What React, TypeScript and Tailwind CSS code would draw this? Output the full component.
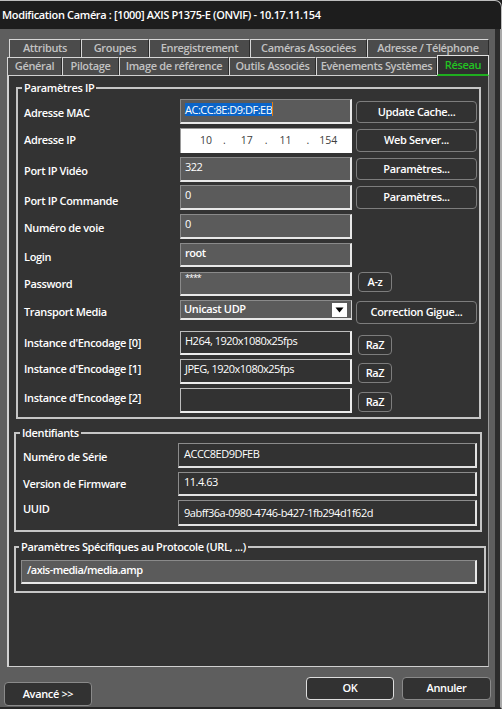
import React from "react";

const inputGray =
  "bg-[#5b5b5b] border-t border-l border-[#8a8a8a] border-b-2 border-r-2 border-b-[#e8e8e8] border-r-[#e8e8e8]";
const inputDark =
  "bg-[#323232] border-t border-l border-[#bdbdbd] border-b-2 border-r-2 border-b-[#ececec] border-r-[#ececec]";
const inputDarkId =
  "bg-[#323232] border-t border-l border-[#8c8c8c] border-b-2 border-r-2 border-b-[#e2e2e2] border-r-[#e2e2e2]";
const btn =
  "bg-[#323232] border border-[#7d7d7d] rounded-[4px] text-white font-semibold flex items-center justify-center";

function Tab({ w, label }: { w: string; label: string }) {
  return (
    <div
      className={`${w} h-full flex items-center justify-center bg-[#4b4b4b] text-[#c2c2c2] border-t border-l border-r border-[#d6d6d6] border-r-[#2c2c2c]`}
    >
      {label}
    </div>
  );
}

function Legend({ children, ml }: { children: React.ReactNode; ml: string }) {
  return (
    <legend className={`${ml} px-[2px] text-white font-semibold leading-[14px]`}>
      {children}
    </legend>
  );
}

function Val({ children, cls = "" }: { children?: React.ReactNode; cls?: string }) {
  return (
    <div className={`pl-[4px] pt-[2px] leading-[14px] text-white font-medium tracking-[-0.5px] ${cls}`}>
      {children}
    </div>
  );
}

function RaZ({ label = "RaZ" }: { label?: string }) {
  return <div className={`${btn} self-start mt-[4px] ml-[6px] w-[34px] h-[20px]`}>{label}</div>;
}

export default function App() {
  return (
    <div className="w-[502px] h-[709px] bg-[#1d1d1d] flex flex-col overflow-hidden font-['Open_Sans','Noto_Sans',sans-serif] text-[11px] tracking-[-0.35px]">
      {/* Title bar */}
      <div className="h-[29px] shrink-0 flex items-center pl-[2px] text-white font-semibold tracking-[-0.35px] border-r border-t border-[#bdbdbd] rounded-tr-[7px]">
        Modification Caméra : [1000] AXIS P1375-E (ONVIF) - 10.17.11.154
      </div>

      {/* Body */}
      <div className="flex-1 bg-[#5e5e5e] flex flex-col border-r-2 border-[#a9a9a9] shadow-[inset_-5px_0_0_#2c2c2c] border-b-2 border-b-[#262626]">
        {/* Tab row 1 */}
        <div className="mt-[10px] ml-[9px] flex h-[18px] font-semibold">
          <Tab w="w-[72px]" label="Attributs" />
          <Tab w="w-[68px]" label="Groupes" />
          <Tab w="w-[101px]" label="Enregistrement" />
          <Tab w="w-[117px]" label="Caméras Associées" />
          <Tab w="w-[122px]" label="Adresse / Téléphone" />
        </div>
        {/* Tab row 2 */}
        <div className="ml-[7px] flex items-end h-[18px] font-semibold relative z-10">
          <Tab w="w-[55px]" label="Général" />
          <Tab w="w-[57px]" label="Pilotage" />
          <Tab w="w-[110px]" label="Image de référence" />
          <Tab w="w-[87px]" label="Outils Associés" />
          <Tab w="w-[121px]" label="Evènements Systèmes" />
          <div className="w-[52px] h-[21px] mb-[-1px] flex items-center justify-center bg-[#2f2f2f] text-[#22c322] border-t border-l border-r border-[#e0e0e0] border-b-2 border-b-[#1fae1f]">
            Réseau
          </div>
        </div>

        {/* Panel */}
        <div className="ml-[7px] w-[482px] h-[592px] shrink-0 bg-[#333333] border-l-2 border-t border-r border-b border-[#d0d0d0] border-r-[#9c9c9c] flex flex-col">
          {/* Paramètres IP */}
          <fieldset className="mt-[5px] ml-[7px] mr-[7px] border-2 border-[#c6c6c6] pb-[4px]">
            <Legend ml="ml-[4px]">Paramètres IP</Legend>

            {/* MAC */}
            <div className="flex items-start h-[25px] mt-[4px]">
              <div className="w-[162px] pl-[6px] pt-[7px] leading-[14px] text-white font-semibold">Adresse MAC</div>
              <div className={`${inputGray} w-[172px] h-full pl-[4px] pt-[2px]`}>
                <span className="inline-flex items-center h-[13px] leading-[13px] bg-[#0a64c8] text-white font-medium tracking-[-0.5px]">
                  AC:CC:8E:D9:DF:EB
                </span>
                <span className="inline-block align-top w-[1px] h-[14px] bg-[#e07a10]" />
              </div>
              <div className={`${btn} ml-[4px] mt-[2px] w-[121px] h-[22px]`}>Update Cache...</div>
            </div>

            {/* IP */}
            <div className="flex items-start h-[25px] mt-[4px]">
              <div className="w-[162px] pl-[6px] pt-[5px] leading-[14px] text-white font-semibold">Adresse IP</div>
              <div className="w-[172px] h-full bg-white border-t border-l border-[#9a9a9a] flex items-center text-[#404040] text-[10.5px] tracking-normal">
                <span className="ml-[19px]">10</span>
                <span className="ml-[11px]">.</span>
                <span className="ml-[15px]">17</span>
                <span className="ml-[12px]">.</span>
                <span className="ml-[12px]">11</span>
                <span className="ml-[15px]">.</span>
                <span className="ml-[10px]">154</span>
              </div>
              <div className={`${btn} ml-[4px] mt-[1px] w-[121px] h-[23px]`}>Web Server...</div>
            </div>

            {/* Port IP Vidéo */}
            <div className="flex items-start h-[25px] mt-[4px]">
              <div className="w-[162px] pl-[6px] pt-[7px] leading-[14px] text-white font-semibold">Port IP Vidéo</div>
              <div className={`${inputGray} w-[172px] h-full`}>
                <Val cls="font-normal">322</Val>
              </div>
              <div className={`${btn} ml-[4px] mt-[1px] w-[121px] h-[22px]`}>Paramètres...</div>
            </div>

            {/* Port IP Commande */}
            <div className="flex items-start h-[25px] mt-[3px]">
              <div className="w-[162px] pl-[6px] pt-[9px] leading-[14px] text-white font-semibold">Port IP Commande</div>
              <div className={`${inputGray} w-[172px] h-full`}>
                <Val cls="font-normal">0</Val>
              </div>
              <div className={`${btn} ml-[4px] mt-[1px] w-[121px] h-[23px]`}>Paramètres...</div>
            </div>

            {/* Numéro de voie */}
            <div className="flex items-start h-[25px] mt-[4px]">
              <div className="w-[162px] pl-[6px] pt-[7px] leading-[14px] text-white font-semibold">Numéro de voie</div>
              <div className={`${inputGray} w-[172px] h-full`}>
                <Val cls="font-normal">0</Val>
              </div>
            </div>

            {/* Login */}
            <div className="flex items-start h-[24px] mt-[4px]">
              <div className="w-[162px] pl-[6px] pt-[7px] leading-[14px] text-white font-semibold">Login</div>
              <div className={`${inputGray} w-[172px] h-full`}>
                <Val cls="font-semibold">root</Val>
              </div>
            </div>

            {/* Password */}
            <div className="flex items-start h-[24px] mt-[5px]">
              <div className="w-[162px] pl-[6px] pt-[5px] leading-[14px] text-white font-semibold">Password</div>
              <div className={`${inputGray} w-[172px] h-full`}>
                <div className="pl-[4px] leading-[10px] text-white text-[9px] tracking-[-1px]">****</div>
              </div>
              <div className={`${btn} self-start ml-[6px] w-[34px] h-[20px]`}>A-z</div>
            </div>

            {/* Transport Media */}
            <div className="flex items-start h-[20px] mt-[4px]">
              <div className="w-[162px] pl-[6px] pt-[5px] leading-[14px] text-white font-semibold">Transport Media</div>
              <div className="w-[172px] h-full bg-[#5b5b5b] border-t border-l border-[#8a8a8a] border-b-2 border-r border-b-[#e8e8e8] border-r-[#d0d0d0] flex items-center">
                <span className="pl-[3px] text-white font-semibold flex-1">Unicast UDP</span>
                <span className="w-[15px] h-[14px] mr-[4px] bg-white flex items-center justify-center">
                  <svg width="9" height="6" viewBox="0 0 9 6">
                    <path d="M0.5 0.5 H8.5 L4.5 5.5 Z" fill="#000" />
                  </svg>
                </span>
              </div>
              <div className={`${btn} ml-[4px] mt-[1px] w-[121px] h-[23px]`}>Correction Gigue...</div>
            </div>

            {/* Instance 0 */}
            <div className="flex items-start h-[24px] mt-[11px]">
              <div className="w-[162px] pl-[6px] pt-[5px] leading-[14px] text-white font-semibold">Instance d'Encodage [0]</div>
              <div className={`${inputDark} w-[172px] h-full`}>
                <Val>H264, 1920x1080x25fps</Val>
              </div>
              <RaZ />
            </div>

            {/* Instance 1 */}
            <div className="flex items-start h-[25px] mt-[4px]">
              <div className="w-[162px] pl-[6px] pt-[3px] leading-[14px] text-white font-semibold">Instance d'Encodage [1]</div>
              <div className={`${inputDark} w-[172px] h-full`}>
                <Val>JPEG, 1920x1080x25fps</Val>
              </div>
              <RaZ />
            </div>

            {/* Instance 2 */}
            <div className="flex items-start h-[25px] mt-[4px]">
              <div className="w-[162px] pl-[6px] pt-[3px] leading-[14px] text-white font-semibold">Instance d'Encodage [2]</div>
              <div className={`${inputDark} w-[172px] h-full`} />
              <RaZ />
            </div>
          </fieldset>

          {/* Identifiants */}
          <fieldset className="mt-[7px] ml-[5px] mr-[6px] border-2 border-[#c6c6c6] pb-[4px]">
            <Legend ml="ml-[4px]">Identifiants</Legend>
            <div className="flex items-start h-[25px] mt-[3px]">
              <div className="w-[162px] pl-[7px] pt-[7px] leading-[14px] text-white font-semibold">Numéro de Série</div>
              <div className={`${inputDarkId} w-[299px] h-full`}>
                <Val cls="pl-[5px] pt-[3px]">ACCC8ED9DFEB</Val>
              </div>
            </div>
            <div className="flex items-start h-[24px] mt-[4px]">
              <div className="w-[162px] pl-[7px] pt-[5px] leading-[14px] text-white font-semibold">Version de Firmware</div>
              <div className={`${inputDarkId} w-[299px] h-full`}>
                <Val cls="pl-[5px] pt-[2px]">11.4.63</Val>
              </div>
            </div>
            <div className="flex items-start h-[26px] mt-[4px]">
              <div className="w-[162px] pl-[7px] pt-[2px] leading-[14px] text-white font-semibold">UUID</div>
              <div className={`${inputDarkId} w-[299px] h-full`}>
                <Val cls="pl-[5px] pt-[5px]">9abff36a-0980-4746-b427-1fb294d1f62d</Val>
              </div>
            </div>
          </fieldset>

          {/* Paramètres Spécifiques */}
          <fieldset className="mt-[8px] ml-[5px] mr-[2px] border-2 border-[#c6c6c6] pb-[7px]">
            <Legend ml="ml-[3px]">Paramètres Spécifiques au Protocole (URL, ...)</Legend>
            <div className={`${inputGray} mt-[6px] ml-[5px] w-[456px] h-[24px]`}>
              <Val cls="pl-[5px] pt-[2px] font-semibold">/axis-media/media.amp</Val>
            </div>
          </fieldset>
        </div>

        {/* Bottom buttons */}
        <div className="flex items-start">
          <div className={`${btn} ml-[4px] mt-[15px] w-[88px] h-[24px] border-[#8a8a8a]`}>Avancé &gt;&gt;</div>
          <div className={`${btn} ml-[214px] mt-[10px] w-[88px] h-[23px] border-[#dedede]`}>OK</div>
          <div className={`${btn} ml-[8px] mt-[10px] w-[89px] h-[23px] border-[#8a8a8a]`}>Annuler</div>
        </div>
      </div>
    </div>
  );
}
